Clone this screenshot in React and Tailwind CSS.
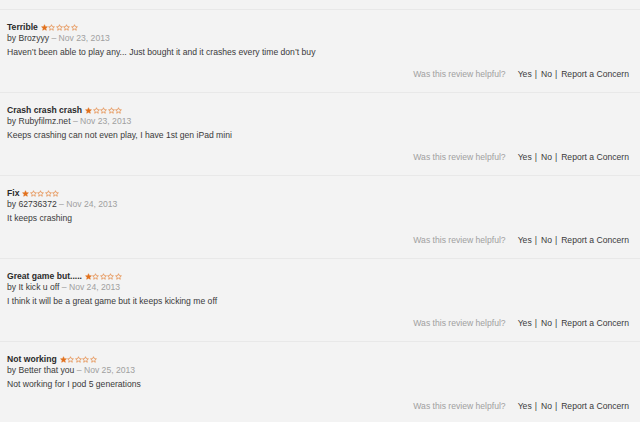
import React from "react";

const reviews = [
  { title: "Terrible", by: "Brozyyy", date: "Nov 23, 2013", text: "Haven\u2019t been able to play any... Just bought it and it crashes every time don\u2019t buy" },
  { title: "Crash crash crash", by: "Rubyfilmz.net", date: "Nov 23, 2013", text: "Keeps crashing can not even play, I have 1st gen iPad mini" },
  { title: "Fix", by: "62736372", date: "Nov 24, 2013", text: "It keeps crashing" },
  { title: "Great game but.....", by: "It kick u off", date: "Nov 24, 2013", text: "I think it will be a great game but it keeps kicking me off" },
  { title: "Not working", by: "Better that you", date: "Nov 25, 2013", text: "Not working for I pod 5 generations" },
];

function Star({ filled }) {
  return (
    <svg width="7" height="7" viewBox="0 0 24 24" className="shrink-0">
      <path
        d="M12 2.5l2.9 6.6 7.1.6-5.4 4.7 1.6 7-6.2-3.7-6.2 3.7 1.6-7L2 9.7l7.1-.6z"
        fill={filled ? "#e2711d" : "none"}
        stroke="#e2711d"
        strokeWidth="2"
        strokeLinejoin="round"
      />
    </svg>
  );
}

function Stars() {
  return (
    <span className="inline-flex items-center gap-[0.5px] ml-[3px]">
      <Star filled />
      <Star />
      <Star />
      <Star />
      <Star />
    </span>
  );
}

export default function App() {
  return (
    <div
      className="w-[640px] h-[422px] overflow-hidden bg-[#f3f3f3] pt-[9px]"
      style={{ fontFamily: '"Liberation Sans", Arial, sans-serif' }}
    >
      {reviews.map((r, i) => (
        <div key={i} className="border-t border-[#e8e8e8] pt-[12px] pb-[12px] px-[7px] text-[8.6px]">
          <div className="h-[11px] leading-[11px] flex items-center font-bold text-[#2a2a2a]">
            {r.title}
            <Stars />
          </div>
          <div className="h-[11px] leading-[11px] text-[#3a3a3a]">
            by {r.by} <span className="text-[#a0a0a0]">&ndash; {r.date}</span>
          </div>
          <div className="h-[11px] leading-[11px] mt-[3px] text-[#3a3a3a]">{r.text}</div>
          <div className="h-[11px] leading-[11px] mt-[11px] flex justify-end pr-[4px] text-[#3a3a3a]">
            <span className="text-[#a0a0a0] mr-[12px]">Was this review helpful?</span>
            <span>Yes</span>
            <span className="ml-[3px] mr-[4px]">|</span>
            <span>No</span>
            <span className="ml-[3px] mr-[4px]">|</span>
            <span>Report a Concern</span>
          </div>
        </div>
      ))}
    </div>
  );
}
